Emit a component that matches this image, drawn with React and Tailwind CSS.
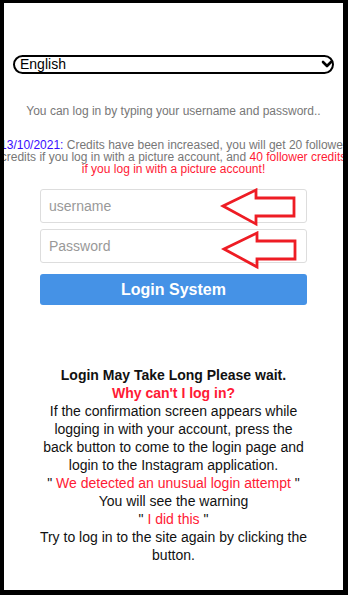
import React from 'react';

const font = { fontFamily: '"Liberation Sans", Arial, sans-serif' };

const Arrow = ({ className }) => (
  <svg className={className} width="80" height="40" viewBox="0 0 80 40" fill="none">
    <path
      d="M3 18 L36 2 L36 10 L74 10 L74 28 L36 28 L36 36 Z"
      stroke="#ee1c24"
      strokeWidth="2.8"
      strokeLinejoin="miter"
    />
  </svg>
);

const App = () => {
  return (
    <div className="w-[348px] h-[595px] bg-black" style={font}>
      <div className="h-full bg-white border-black border-t-[3px] border-l-4 border-r-[5px] border-b-[5px] overflow-hidden flex flex-col">
        {/* language */}
        <div className="px-[9px] mt-[52px] relative flex">
          <select className="appearance-none w-full h-[19px] rounded-full border-2 border-black bg-white text-[14px] leading-[15px] pl-[5px] text-black outline-none">
            <option>English</option>
          </select>
          <svg className="absolute right-[10px] top-[5px] pointer-events-none" width="12" height="9" viewBox="0 0 12 9">
            <path d="M2 2 L6 6 L10 2" stroke="black" strokeWidth="2.6" fill="none" strokeLinecap="round" strokeLinejoin="round" />
          </svg>
        </div>

        <p className="mt-[30px] text-center text-[12px] leading-[14px] text-[#777]">
          You can log in by typing your username and password..
        </p>

        <div className="mt-[21px] flex flex-col items-center text-[12px] leading-[12px] text-[#777] whitespace-nowrap">
          <span><span className="text-[#3a0cff]">13/10/2021:</span> Credits have been increased, you will get 20 follower</span>
          <span>credits if you log in with a picture account, and <span className="text-[#ff1a35]">40 follower credits</span></span>
          <span className="text-[#ff1a35]">if you log in with a picture account!</span>
        </div>

        {/* form */}
        <div className="mt-[14px] mx-auto w-[267px] flex flex-col relative">
          <input
            placeholder="username"
            className="h-[34px] rounded-[3px] border border-[#ddd] px-[8px] text-[14px] placeholder:text-[#999] outline-none"
          />
          <input
            placeholder="Password"
            className="mt-[6px] h-[34px] rounded-[3px] border border-[#ddd] px-[8px] text-[14px] placeholder:text-[#999] outline-none"
          />
          <button className="mt-[11px] h-[31px] rounded-[3px] bg-[#4592e6] text-white font-bold text-[16px]">
            Login System
          </button>
          <Arrow className="absolute left-[180px] top-[-1px]" />
          <Arrow className="absolute left-[181px] top-[42px]" />
        </div>

        {/* info */}
        <div className="mt-[61px] text-center text-[14px] leading-[18px] text-[#111] whitespace-nowrap">
          <p className="font-bold">Login May Take Long Please wait.</p>
          <p className="font-bold text-[#ff1a35]">Why can't I log in?</p>
          <p>
            If the confirmation screen appears while<br />
            logging in with your account, press the<br />
            back button to come to the login page and<br />
            login to the Instagram application.
          </p>
          <p>" <span className="text-[#ff1a35]">We detected an unusual login attempt</span> "</p>
          <p>You will see the warning</p>
          <p>" <span className="text-[#ff1a35]">I did this</span> "</p>
          <p>Try to log in to the site again by clicking the<br />button.</p>
        </div>
      </div>
    </div>
  );
};

export default App;
